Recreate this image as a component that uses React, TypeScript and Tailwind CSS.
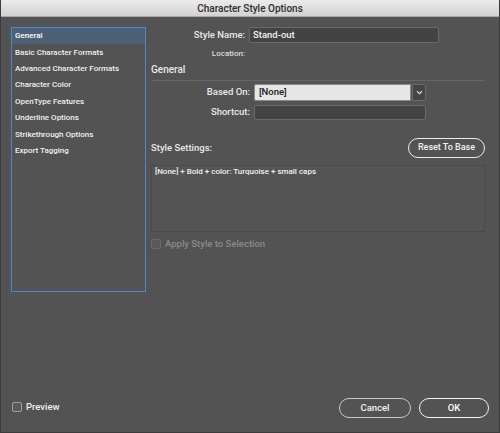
import { useState } from "react";

const items = [
  "General",
  "Basic Character Formats",
  "Advanced Character Formats",
  "Character Color",
  "OpenType Features",
  "Underline Options",
  "Strikethrough Options",
  "Export Tagging",
];

function Check({ disabled }: { disabled?: boolean }) {
  return (
    <span
      className={`inline-block w-[10px] h-[10px] rounded-[2px] border ${
        disabled ? "border-[#6a6a6a] bg-[#585858]" : "border-[#a0a0a0] bg-[#5a5a5a]"
      }`}
    />
  );
}

export default function App() {
  const [sel, setSel] = useState(0);

  return (
    <div
      className="w-[500px] h-[433px] flex flex-col bg-[#535353] text-[#e8e8e8] font-medium overflow-hidden border-x border-b border-[#3c3c3c]"
      style={{ fontFamily: 'Roboto, "Liberation Sans", Arial, sans-serif' }}
    >
      {/* title bar */}
      <div className="h-[17px] shrink-0 flex items-center justify-center bg-gradient-to-b from-[#ebebeb] to-[#d2d2d2] border-b border-[#a8a8a8] text-[10px] text-[#2e2e2e]">
        Character Style Options
      </div>

      <div className="flex flex-1">
        {/* category list */}
        <div className="ml-[10px] mt-[10px] w-[135px] h-[265px] border border-[#4a88c8]">
          {items.map((it, i) => (
            <div
              key={it}
              onClick={() => setSel(i)}
              className={`h-[16.4px] pl-[3px] flex items-center text-[8px] leading-none cursor-default ${
                sel === i ? "bg-[#4d6176] text-white" : "text-[#f0f0f0]"
              }`}
            >
              {it}
            </div>
          ))}
        </div>

        {/* right panel */}
        <div className="ml-[5px] w-[334px] flex flex-col">
          <div className="mt-[10px] flex items-center h-[16px]">
            <span className="w-[94px] text-right text-[9.5px]">Style Name:</span>
            <div className="ml-[4px] w-[190px] h-[16px] bg-[#434343] border border-[#6a6a6a] rounded-[2px] flex items-center px-[3px] text-[9.5px] text-[#f2f2f2]">
              Stand-out
            </div>
          </div>
          <div className="mt-[6px] flex items-center h-[10px]">
            <span className="w-[94px] text-right text-[8px] text-[#dcdcdc]">Location:</span>
          </div>

          <div className="mt-[5px] text-[10px] h-[12px] leading-[12px]">General</div>
          <div className="mt-[4px] h-px bg-[#656565]" />

          <div className="mt-[3px] flex items-center h-[17px]">
            <span className="w-[99px] text-right text-[9.5px]">Based On:</span>
            <div className="ml-[4px] w-[157px] h-[17px] bg-[#e6e6e6] border border-[#8a8a8a] rounded-l-[2px] flex items-center px-[4px] text-[9.5px] text-[#222]">
              [None]
            </div>
            <div className="ml-px w-[14px] h-[17px] bg-[#454545] border border-[#6a6a6a] rounded-r-[2px] flex items-center justify-center">
              <svg width="7" height="5" viewBox="0 0 7 5">
                <path d="M1 1.2 L3.5 3.6 L6 1.2" stroke="#d8d8d8" strokeWidth="1.2" fill="none" />
              </svg>
            </div>
          </div>
          <div className="mt-[4px] flex items-center h-[15px]">
            <span className="w-[99px] text-right text-[9.5px]">Shortcut:</span>
            <div className="ml-[4px] w-[172px] h-[15px] bg-[#434343] border border-[#6a6a6a] rounded-[2px]" />
          </div>

          <div className="mt-[18px] flex items-center justify-between h-[20px]">
            <span className="text-[9.5px]">Style Settings:</span>
            <button className="w-[77px] h-[20px] rounded-full border-[1.5px] border-[#ececec] text-[9px] text-[#f2f2f2] bg-[#535353]">
              Reset To Base
            </button>
          </div>

          <div className="mt-[7px] h-[67px] border border-[#4a4a4a] bg-[#545454] px-[3px] text-[8px] leading-[12px] text-[#f0f0f0]">
            [None] + Bold + color: Turquoise + small caps
          </div>

          <div className="mt-[6px] flex items-center gap-[4px] h-[12px]">
            <Check disabled />
            <span className="text-[9.5px] text-[#8a8a8a]">Apply Style to Selection</span>
          </div>
        </div>
      </div>

      {/* footer */}
      <div className="h-[35px] shrink-0 flex items-start">
        <div className="ml-[11px] mt-[3px] flex items-center gap-[4px]">
          <Check />
          <span className="text-[9.5px] text-[#f0f0f0]">Preview</span>
        </div>
        <div className="ml-auto mr-[10px] mt-[1px] flex gap-[8px]">
          <button className="w-[72px] h-[20px] rounded-full border-[1.5px] border-[#c8c8c8] text-[9.5px] text-[#f0f0f0]">
            Cancel
          </button>
          <button className="w-[70px] h-[20px] rounded-full border-[1.5px] border-[#f4f4f4] text-[9.5px] text-white">
            OK
          </button>
        </div>
      </div>
    </div>
  );
}
